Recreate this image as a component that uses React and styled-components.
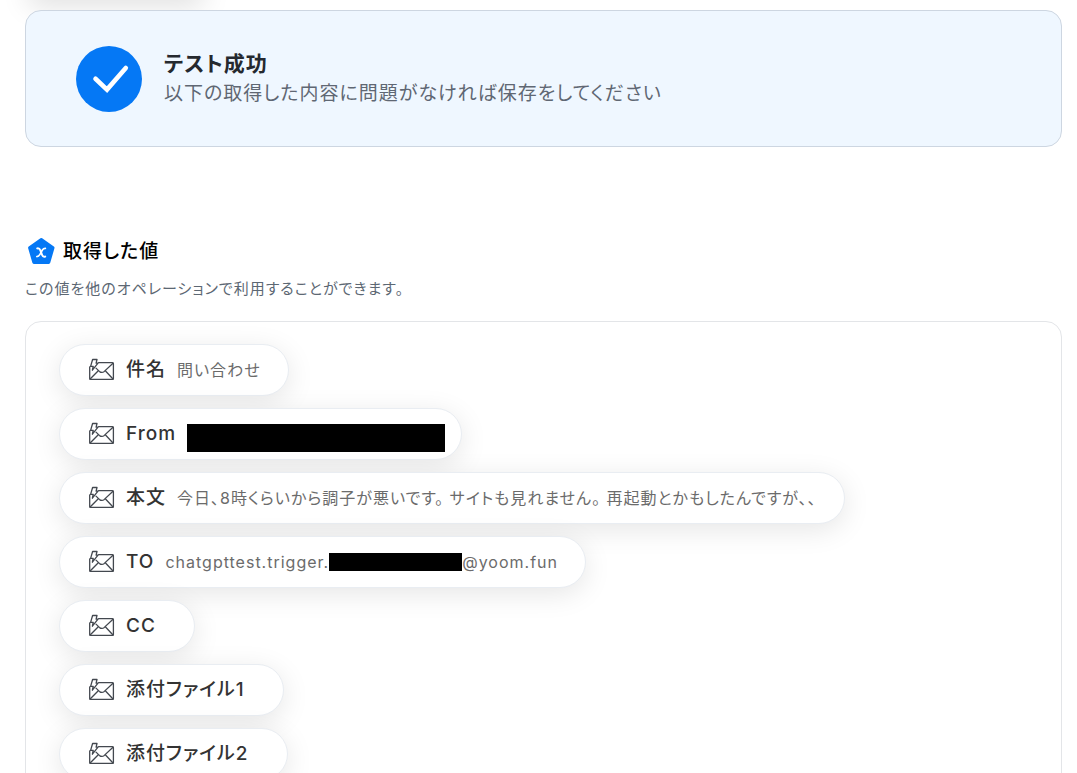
import React from 'react';
import styled, { createGlobalStyle } from 'styled-components';

const outputs = [
	{ id: 'subject', label: '件名', value: '問い合わせ' },
	{ id: 'from', label: 'From', masked: 'tall' },
	{
		id: 'body',
		label: '本文',
		value: '今日、8時くらいから調子が悪いです。 サイトも見れません。 再起動とかもしたんですが、、'
	},
	{ id: 'to', label: 'TO', value: 'chatgpttest.trigger.', masked: 'inline', suffix: '@yoom.fun' },
	{ id: 'cc', label: 'CC' },
	{ id: 'file1', label: '添付ファイル1' },
	{ id: 'file2', label: '添付ファイル2' }
];

const CheckIcon = () => (
	<svg width="66" height="66" viewBox="0 0 66 66" fill="none" aria-hidden="true">
		<circle cx="33" cy="33" r="33" fill="#0578f5" />
		<path d="M19.5 32.8 31 43.6 49.8 22" stroke="#fff" strokeWidth="4.6" strokeLinecap="round" />
	</svg>
);

const ValueIcon = () => (
	<svg width="28" height="28" viewBox="0 1 28 28" fill="none" aria-hidden="true">
		<path
			d="M14.3 2.6 26 10.8 21.8 25.4H6.8L2.6 10.8Z"
			fill="#0578f5"
			stroke="#0578f5"
			strokeWidth="3"
			strokeLinejoin="round"
		/>
		<path
			d="M10.2 11.4c1.6-.3 2.5.3 3.2 2l1.7 4.6c.6 1.6 1.5 2.1 3.1 1.6"
			stroke="#fff"
			strokeWidth="2"
			strokeLinecap="round"
		/>
		<path
			d="M18.4 11.4c-1.4-.1-2.2.4-3 1.6l-2.6 4.7c-.7 1.3-1.5 1.9-3 1.9"
			stroke="#fff"
			strokeWidth="1.6"
			strokeLinecap="round"
		/>
	</svg>
);

const MailIcon = () => (
	<svg
		width="26"
		height="24"
		viewBox="0 0 26 24"
		fill="none"
		stroke="#43484f"
		strokeWidth="1.3"
		strokeLinejoin="round"
		strokeLinecap="round"
		aria-hidden="true"
	>
		<path d="M9.6 4.7H23.4a1 1 0 0 1 1 1V20.4a1 1 0 0 1-1 1H1.7a1 1 0 0 1-1-1V8.8" />
		<path d="M3.6 1.5H8L7.1 5.2H9L3.4 12.2 4.2 8.4H1.6Z" />
		<path d="M24 5.2 15.3 13.4Q12.8 15.4 10.4 13.4L7 10.1M1.1 21 9.3 12.8M24 21 16.3 12.8" />
	</svg>
);

const OutputChip = ({ item }) => (
	<Chip>
		<MailIcon />
		<Label>{item.label}</Label>
		<Value>
			{item.value}
			{item.masked && <Mask $kind={item.masked} />}
			{item.suffix}
		</Value>
	</Chip>
);

const App = () => {
	return (
		<Page>
			<GlobalStyle />
			<ScrolledEdge />
			<Banner role="status">
				<CheckIcon />
				<div>
					<BannerTitle>テスト成功</BannerTitle>
					<BannerText>以下の取得した内容に問題がなければ保存をしてください</BannerText>
				</div>
			</Banner>
			<Section>
				<SectionTitle>
					<ValueIcon />
					取得した値
				</SectionTitle>
				<SectionText>この値を他のオペレーションで利用することができます。</SectionText>
				<ChipList>
					{outputs.map((item) => (
						<OutputChip key={item.id} item={item} />
					))}
				</ChipList>
			</Section>
		</Page>
	);
};

export default App;

const GlobalStyle = createGlobalStyle`
	* {
		box-sizing: border-box;
	}
	body {
		margin: 0;
		background: #fff;
		font-family: Inter, "Noto Sans CJK JP", sans-serif;
		font-feature-settings: "palt";
		letter-spacing: 1px;
	}
`;

const Page = styled.main`
	height: 100vh;
	padding: 0 15px 0 25px;
	overflow: hidden;
`;

/* shadow left by the test button that is scrolled out above */
const ScrolledEdge = styled.div`
	width: 150px;
	margin-left: 16px;
	box-shadow: 0 -8px 28px 12px rgba(0, 0, 0, 0.15);
`;

const Banner = styled.section`
	display: flex;
	align-items: center;
	gap: 22px;
	height: 137px;
	margin-top: 10px;
	padding: 0 50px;
	border: 1px solid #cdd6e1;
	border-radius: 16px;
	background: #eff7ff;
`;

const BannerTitle = styled.h2`
	margin: 0 0 2px;
	font-size: 21px;
	font-weight: 700;
	line-height: 28px;
	color: #25292f;
`;

const BannerText = styled.p`
	margin: 0;
	font-size: 19px;
	line-height: 28px;
	color: #5f6773;
`;

const Section = styled.section`
	margin-top: 90px;
`;

const SectionTitle = styled.h3`
	display: flex;
	align-items: center;
	gap: 8px;
	margin: 0;
	padding-left: 2px;
	font-size: 19px;
	font-weight: 500;
	line-height: 30px;
	color: #000;
`;

const SectionText = styled.p`
	margin: 10px 0 20px;
	font-size: 15px;
	line-height: 24px;
	color: #5c6773;
`;

const ChipList = styled.ul`
	display: flex;
	flex-direction: column;
	align-items: flex-start;
	gap: 12px;
	margin: 0;
	padding: 22px 33px;
	border: 1px solid #e3e5e8;
	border-radius: 16px;
	list-style: none;
`;

const Chip = styled.li`
	display: flex;
	align-items: center;
	gap: 11px;
	height: 52px;
	padding: 0 27px 0 29px;
	border: 1px solid #e9edf2;
	border-radius: 26px;
	background: #fff;
	box-shadow: 0 6px 28px rgba(0, 0, 0, 0.1);
	white-space: nowrap;
`;

const Label = styled.span`
	font-size: 19px;
	font-weight: 500;
	line-height: 28px;
	color: #333;
`;

const Value = styled.span`
	display: flex;
	align-items: center;
	font-size: 16px;
	line-height: 28px;
	color: #6b6b6b;
`;

const Mask = styled.span`
	width: ${({ $kind }) => ($kind === 'tall' ? '258px' : '133px')};
	height: ${({ $kind }) => ($kind === 'tall' ? '28px' : '18px')};
	margin: ${({ $kind }) => ($kind === 'tall' ? '7px -11px 0 0' : '0')};
	background: #000;
`;
